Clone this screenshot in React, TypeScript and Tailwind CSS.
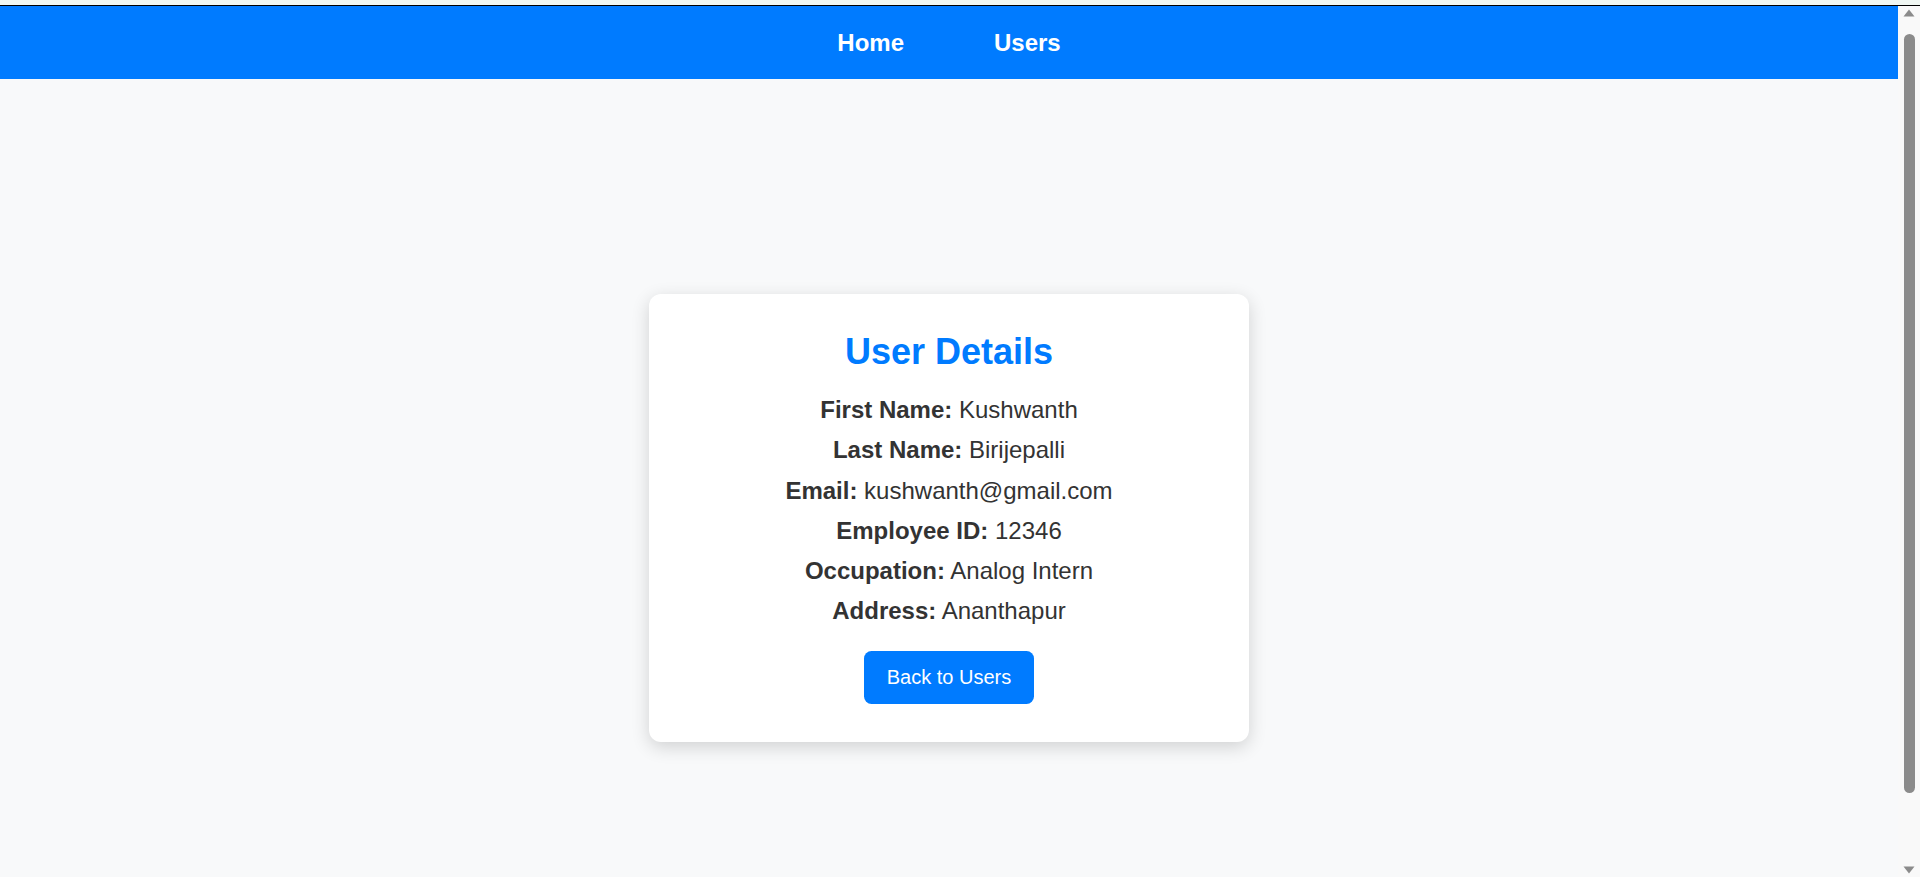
import React from "react";

type Detail = { label: string; value: string };

const details: Detail[] = [
  { label: "First Name:", value: "Kushwanth" },
  { label: "Last Name:", value: "Birijepalli" },
  { label: "Email:", value: "kushwanth@gmail.com" },
  { label: "Employee ID:", value: "12346" },
  { label: "Occupation:", value: "Analog Intern" },
  { label: "Address:", value: "Ananthapur" },
];

const Navbar: React.FC = () => {
  return (
    <nav className="h-[73px] shrink-0 bg-[#007bff] flex items-center justify-center gap-[90px]">
      <a href="#" className="text-white font-bold text-[24px] leading-[28px]">
        Home
      </a>
      <a href="#" className="text-white font-bold text-[24px] leading-[28px]">
        Users
      </a>
    </nav>
  );
};

const UserDetails: React.FC = () => {
  return (
    <div className="w-[600px] bg-white rounded-[12px] shadow-[0_5px_18px_rgba(0,0,0,0.16)] pt-[37px] pb-[38px] text-center">
      <h2 className="text-[36px] leading-[41px] font-bold text-[#007bff] mb-[24.5px]">
        User Details
      </h2>
      <div className="flex flex-col gap-[12.25px] text-[24px] leading-[28px] text-[#333]">
        {details.map((d) => (
          <p key={d.label}>
            <strong className="font-bold">{d.label}</strong> {d.value}
          </p>
        ))}
      </div>
      <button className="mt-[25.25px] bg-[#007bff] text-white text-[20px] leading-[23px] px-[22.5px] py-[15px] rounded-[7.5px]">
        Back to Users
      </button>
    </div>
  );
};

const Scrollbar: React.FC = () => {
  return (
    <div className="w-[22px] shrink-0 bg-[#f9f9f9] flex flex-col items-center pt-[3px] pb-[3px]">
      <svg width="12" height="8" viewBox="0 0 12 8">
        <path d="M6 0.5 L11.5 7.5 L0.5 7.5 Z" fill="#8b8b8b" />
      </svg>
      <div className="mt-[17px] w-[11px] h-[759px] rounded-full bg-[#8b8b8b]" />
      <div className="flex-1" />
      <svg width="12" height="8" viewBox="0 0 12 8">
        <path d="M0.5 0.5 L11.5 0.5 L6 7.5 Z" fill="#8b8b8b" />
      </svg>
    </div>
  );
};

const App: React.FC = () => {
  return (
    <div className="h-screen flex flex-col overflow-hidden bg-[#f8f9fa] font-['Liberation_Sans',Arial,sans-serif]">
      <div className="h-[5px] shrink-0 bg-[#f0f7f3]" />
      <div className="h-px shrink-0 bg-black" />
      <div className="flex flex-1 min-h-0">
        <div className="flex-1 min-w-0 overflow-hidden flex flex-col">
          <Navbar />
          <main className="h-[877px] shrink-0 flex items-center justify-center">
            <UserDetails />
          </main>
        </div>
        <Scrollbar />
      </div>
    </div>
  );
};

export default App;
